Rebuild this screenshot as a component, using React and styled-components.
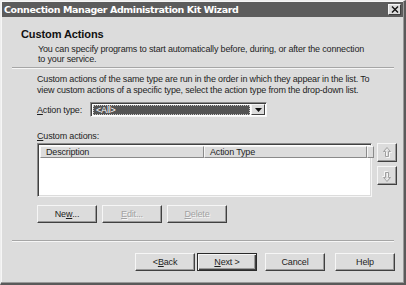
import React from 'react';
import styled, { createGlobalStyle, css } from 'styled-components';

const Global = createGlobalStyle`
  html, body {
    margin: 0;
    padding: 0;
    background: #dcdcdc;
  }
  * { box-sizing: border-box; }
`;

const Window = styled.div`
  width: 406px;
  height: 285px;
  display: flex;
  flex-direction: column;
  background: #dcdcdc;
  border-top: 1px solid #eeeeee;
  border-left: 1px solid #eeeeee;
  border-right: 2px solid #5a5a5a;
  border-bottom: 2px solid #5a5a5a;
  box-shadow: inset -1px -1px 0 #9a9a9a, inset 1px 1px 0 #f6f6f6;
  font-family: 'Liberation Sans', Arial, sans-serif;
  font-size: 9px;
  letter-spacing: -0.17px;
  color: #1e1e1e;
  padding: 1px;
`;

const TitleBar = styled.div`
  height: 15px;
  background: #5c5c5c;
  display: flex;
  align-items: center;
  justify-content: space-between;
  padding: 0 2px 0 2px;
`;

const TitleText = styled.span`
  font-family: 'DejaVu Sans', Verdana, sans-serif;
  font-weight: bold;
  font-size: 9.5px;
  letter-spacing: -0.41px;
  color: #ffffff;
`;

const CloseBox = styled.div`
  width: 13px;
  height: 11px;
  background: #dcdcdc;
  border-top: 1px solid #f6f6f6;
  border-left: 1px solid #f6f6f6;
  border-right: 1px solid #404040;
  border-bottom: 1px solid #404040;
  display: flex;
  align-items: center;
  justify-content: center;
`;

const Header = styled.div`
  padding: 11px 0 0 19px;
  height: 50px;
`;

const HeaderTitle = styled.div`
  font-weight: bold;
  font-size: 11px;
  letter-spacing: -0.1px;
  line-height: 13px;
  color: #111;
`;

const HeaderSub = styled.div`
  padding: 3px 0 0 17px;
  line-height: 10px;
  width: 352px;
`;

const Separator = styled.div`
  margin: 0 9px 0 10px;
  height: 2px;
  border-top: 1px solid #a6a6a6;
  border-bottom: 1px solid #f6f6f6;
`;

const Body = styled.div`
  padding: 5px 0 0 35px;
  flex: 1;
  display: flex;
  flex-direction: column;
`;

const Para = styled.div`
  line-height: 11px;
  width: 340px;
`;

const Row = styled.div`
  display: flex;
  align-items: center;
  gap: ${p => p.$gap || 0}px;
  margin-top: ${p => p.$top || 0}px;
`;

const Label = styled.span`
  width: 53px;
`;

const U = styled.span`
  text-decoration: underline;
  text-underline-offset: 1px;
`;

const Combo = styled.div`
  width: 177px;
  height: 15px;
  background: #ffffff;
  border-top: 1px solid #8a8a8a;
  border-left: 1px solid #8a8a8a;
  border-right: 1px solid #f6f6f6;
  border-bottom: 1px solid #f6f6f6;
  box-shadow: inset 1px 1px 0 #404040;
  display: flex;
  padding: 2px 1px 1px 2px;
`;

const ComboValue = styled.div`
  flex: 1;
  background: #545454;
  color: #ffffff;
  outline: 1px dotted #c8c8c8;
  outline-offset: -1px;
  line-height: 10px;
  padding-left: 3px;
  margin-right: 1px;
`;

const ComboArrow = styled.div`
  width: 14px;
  background: #dcdcdc;
  border-top: 1px solid #f6f6f6;
  border-left: 1px solid #f6f6f6;
  border-right: 1px solid #404040;
  border-bottom: 1px solid #404040;
  margin-top: -1px;
  display: flex;
  align-items: center;
  justify-content: center;
`;

const ListArea = styled.div`
  display: flex;
  gap: 5px;
  margin-top: 2px;
`;

const ListBox = styled.div`
  width: 335px;
  height: 54px;
  background: #ffffff;
  border-top: 1px solid #8a8a8a;
  border-left: 1px solid #8a8a8a;
  border-right: 1px solid #f6f6f6;
  border-bottom: 1px solid #f6f6f6;
  box-shadow: inset 1px 1px 0 #404040, inset -1px -1px 0 #dcdcdc;
  padding: 2px;
`;

const ListHeader = styled.div`
  display: flex;
  height: 12px;
`;

const HeaderCell = styled.div`
  width: ${p => p.$w}px;
  background: #dcdcdc;
  border-top: 1px solid #f6f6f6;
  border-left: 1px solid #f6f6f6;
  border-right: 1px solid #8a8a8a;
  border-bottom: 1px solid #8a8a8a;
  line-height: 10px;
  padding-left: 5px;
  flex: ${p => (p.$fill ? 1 : 'none')};
`;

const SideButtons = styled.div`
  display: flex;
  flex-direction: column;
  gap: 4px;
`;

const raised = css`
  background: #dcdcdc;
  border-top: 1px solid #f6f6f6;
  border-left: 1px solid #f6f6f6;
  border-right: 1px solid #404040;
  border-bottom: 1px solid #404040;
  box-shadow: inset -1px -1px 0 #9a9a9a;
`;

const IconButton = styled.div`
  ${raised}
  width: 20px;
  height: 19px;
  display: flex;
  align-items: center;
  justify-content: center;
`;

const Button = styled.div`
  ${raised}
  width: 60px;
  height: 18px;
  margin-left: ${p => p.$ml || 0}px;
  display: flex;
  align-items: center;
  justify-content: center;
  color: ${p => (p.$disabled ? '#a2a2a2' : '#1e1e1e')};
  text-shadow: ${p => (p.$disabled ? '1px 1px 0 #f6f6f6' : 'none')};
  ${p =>
    p.$default &&
    css`
      border: 1px solid #2a2a2a;
      box-shadow: inset 1px 1px 0 #f6f6f6, inset -1px -1px 0 #404040, inset -2px -2px 0 #9a9a9a;
    `}
`;

const Footer = styled.div`
  display: flex;
  justify-content: flex-end;
  gap: 2px;
  padding: 11px 8px 0 0;
  height: 40px;
`;

const ArrowIcon = ({ down }) => (
  <svg width="10" height="12" viewBox="0 0 10 12">
    <g transform={down ? 'rotate(180 5 6)' : undefined}>
      <path d="M6 1.5 L9.5 5.5 L7.5 5.5 L7.5 10.5 L4.5 10.5 L4.5 5.5 L2.5 5.5 Z" fill="none" stroke="#f6f6f6" />
      <path d="M5 0.5 L8.5 4.5 L6.5 4.5 L6.5 9.5 L3.5 9.5 L3.5 4.5 L1.5 4.5 Z" fill="none" stroke="#a0a0a0" />
    </g>
  </svg>
);

const App = () => (
  <>
    <Global />
    <Window>
      <TitleBar>
        <TitleText>Connection Manager Administration Kit Wizard</TitleText>
        <CloseBox>
          <svg width="8" height="7" viewBox="0 0 8 7">
            <path d="M1 0.5 L7 6.5 M7 0.5 L1 6.5" stroke="#111" strokeWidth="1.4" />
          </svg>
        </CloseBox>
      </TitleBar>
      <Header>
        <HeaderTitle>Custom Actions</HeaderTitle>
        <HeaderSub>
          You can specify programs to start automatically before, during, or after the connection to your service.
        </HeaderSub>
      </Header>
      <Separator />
      <Body>
        <Para>
          Custom actions of the same type are run in the order in which they appear in the list. To view custom
          actions of a specific type, select the action type from the drop-down list.
        </Para>
        <Row $top={6}>
          <Label>
            <U>A</U>ction type:
          </Label>
          <Combo>
            <ComboValue>&lt;All&gt;</ComboValue>
            <ComboArrow>
              <svg width="7" height="4" viewBox="0 0 7 4">
                <path d="M0 0 H7 L3.5 4 Z" fill="#111" />
              </svg>
            </ComboArrow>
          </Combo>
        </Row>
        <Row $top={14}>
          <span>
            <U>C</U>ustom actions:
          </span>
        </Row>
        <ListArea>
          <ListBox>
            <ListHeader>
              <HeaderCell $w={164}>Description</HeaderCell>
              <HeaderCell $w={163}>Action Type</HeaderCell>
              <HeaderCell $fill />
            </ListHeader>
          </ListBox>
          <SideButtons>
            <IconButton>
              <ArrowIcon />
            </IconButton>
            <IconButton>
              <ArrowIcon down />
            </IconButton>
          </SideButtons>
        </ListArea>
        <Row $top={8} $gap={5}>
          <Button>
            Ne<U>w</U>...
          </Button>
          <Button $disabled>
            <U>E</U>dit...
          </Button>
          <Button $disabled>
            <U>D</U>elete
          </Button>
        </Row>
      </Body>
      <Separator />
      <Footer>
        <Button>
          &lt; <U>B</U>ack
        </Button>
        <Button $default>
          <U>N</U>ext &gt;
        </Button>
        <Button $ml={6}>Cancel</Button>
        <Button $ml={8}>Help</Button>
      </Footer>
    </Window>
  </>
);

export default App;
